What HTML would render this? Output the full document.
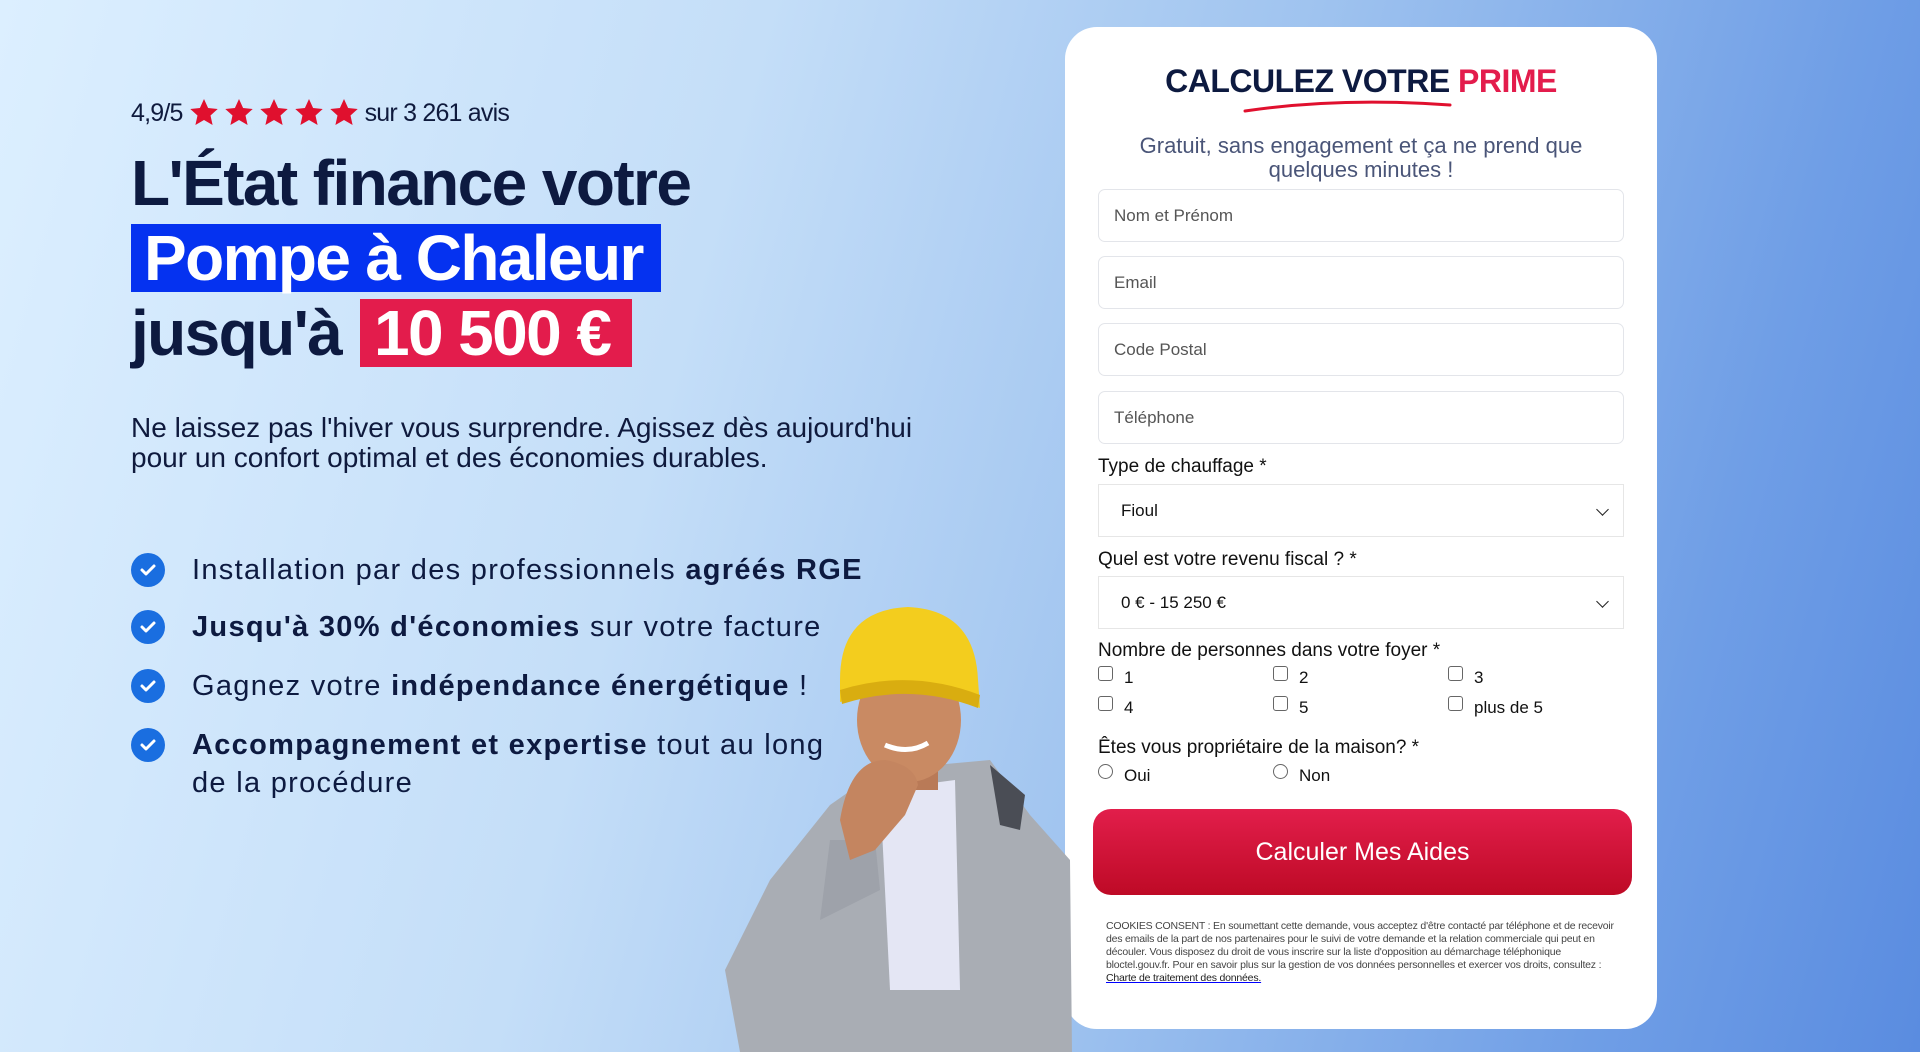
<!DOCTYPE html>
<html><head><meta charset="utf-8">
<style>
*{margin:0;padding:0;box-sizing:border-box}
body{width:1920px;height:1052px;overflow:hidden;position:relative;font-family:"Liberation Sans",sans-serif;
background:linear-gradient(105deg,#dcefff 0%,#c4def8 35%,#9fc3ef 60%,#6f9ee6 85%,#5a8ce0 100%);}
.abs{position:absolute}
.rating{left:131px;top:98px;font-size:25px;color:#0f1a3d;letter-spacing:-0.8px;display:flex;align-items:center;gap:6px;white-space:nowrap}
h1{position:absolute;left:131px;top:146px;font-size:64px;font-weight:bold;color:#0d1a40;letter-spacing:-1.6px;line-height:74px;white-space:nowrap}
.blue{position:absolute;left:131px;top:224px;width:530px;height:68px;background:#0532f0;color:#fff;font-size:64px;font-weight:bold;letter-spacing:-1.6px;line-height:68px;padding-left:13px;white-space:nowrap}
.l3{position:absolute;left:131px;top:296px;font-size:64px;font-weight:bold;color:#0d1a40;letter-spacing:-1.6px;line-height:74px}
.red{position:absolute;left:360px;top:299px;width:272px;height:68px;background:#e31c4c;color:#fff;font-size:64px;font-weight:bold;letter-spacing:-1.6px;line-height:68px;padding-left:14px;white-space:nowrap}
.para{left:131px;top:413px;font-size:28px;line-height:30px;color:#0f1a3d;width:800px;letter-spacing:0}
.bul{left:131px;font-size:29px;color:#0d1a40;letter-spacing:1.3px;line-height:38px}
.bul .ck{position:absolute;left:0;top:2px;width:34px;height:34px;border-radius:50%;background:#1a6ee0}
.bul .t{position:absolute;left:61px;top:0;white-space:nowrap}
.card{left:1065px;top:27px;width:592px;height:1002px;background:#fff;border-radius:32px}
.title{position:absolute;left:0;width:100%;top:36px;text-align:center;font-size:32px;font-weight:bold;color:#0d1a40;letter-spacing:-0.5px}
.sub{position:absolute;left:40px;width:512px;top:107px;text-align:center;font-size:22px;line-height:24px;color:#4a5578}
.inp{position:absolute;left:33px;width:526px;height:53px;border:1px solid #e3e5ea;border-radius:7px;font-size:17px;color:#555;padding-left:15px;line-height:51px}
.lbl{position:absolute;left:33px;font-size:19px;color:#111}
.sel{position:absolute;left:33px;width:526px;height:53px;border:1px solid #e6e6e6;font-size:17px;color:#111;padding-left:22px;line-height:51px}
.sel:after{content:"";position:absolute;right:16px;top:20px;width:8px;height:8px;border-right:1.5px solid #222;border-bottom:1.5px solid #222;transform:rotate(45deg)}
.cb{position:absolute;font-size:17px;color:#111}
.cb i{position:absolute;left:0;top:-2px;width:15px;height:15px;border:1.3px solid #666;border-radius:3px}
.cb i.r{border-radius:50%}
.cb span{position:absolute;left:26px;top:0;white-space:nowrap}
.btn{position:absolute;left:28px;top:782px;width:539px;height:86px;border-radius:18px;background:linear-gradient(#e21e4b,#be0a26);color:#fff;font-size:25px;text-align:center;line-height:86px}
.cons{position:absolute;left:41px;top:893px;width:512px;font-size:10.5px;line-height:13px;color:#444;letter-spacing:-0.2px}
.cons u{color:#222;text-decoration-color:#00f}
</style></head><body>

<div class="abs rating">4,9/5
<svg width="170" height="30" viewBox="0 0 170 30">
<defs><path id="s" d="M15 1l4.1 9 9.6 1-7.2 6.5 2.1 9.5L15 22l-8.6 5 2.1-9.5L1.3 11l9.6-1z" fill="#e0102e"/></defs>
<use href="#s" x="0"/><use href="#s" x="35"/><use href="#s" x="70"/><use href="#s" x="105"/><use href="#s" x="140"/>
</svg> sur 3 261 avis</div>
<h1>L'État finance votre</h1>
<div class="blue">Pompe à Chaleur</div>
<div class="l3">jusqu'à</div>
<div class="red">10 500 €</div>
<div class="abs para">Ne laissez pas l'hiver vous surprendre. Agissez dès aujourd'hui pour un confort optimal et des économies durables.</div>

<div class="abs bul" style="top:551px"><div class="ck"><svg width="34" height="34"><path d="M11 17l4 4 8-8" stroke="#fff" stroke-width="3" fill="none" stroke-linecap="round" stroke-linejoin="round"/></svg></div><div class="t">Installation par des professionnels <b>agréés RGE</b></div></div>
<div class="abs bul" style="top:608px"><div class="ck"><svg width="34" height="34"><path d="M11 17l4 4 8-8" stroke="#fff" stroke-width="3" fill="none" stroke-linecap="round" stroke-linejoin="round"/></svg></div><div class="t"><b>Jusqu'à 30% d'économies</b> sur votre facture</div></div>
<div class="abs bul" style="top:667px"><div class="ck"><svg width="34" height="34"><path d="M11 17l4 4 8-8" stroke="#fff" stroke-width="3" fill="none" stroke-linecap="round" stroke-linejoin="round"/></svg></div><div class="t">Gagnez votre <b>indépendance énergétique</b> !</div></div>
<div class="abs bul" style="top:726px"><div class="ck"><svg width="34" height="34"><path d="M11 17l4 4 8-8" stroke="#fff" stroke-width="3" fill="none" stroke-linecap="round" stroke-linejoin="round"/></svg></div><div class="t"><b>Accompagnement et expertise</b> tout au long<br>de la procédure</div></div>

<div class="abs card">
<div class="title">CALCULEZ VOTRE <span style="color:#e31c4c">PRIME</span></div>
<svg class="abs" style="left:175px;top:68px" width="220" height="25"><path d="M5 16 Q100 2 210 10" stroke="#e0102e" stroke-width="3" fill="none" stroke-linecap="round"/></svg>
<div class="sub">Gratuit, sans engagement et ça ne prend que quelques minutes !</div>
<div class="inp" style="top:162px">Nom et Prénom</div>
<div class="inp" style="top:229px">Email</div>
<div class="inp" style="top:296px">Code Postal</div>
<div class="inp" style="top:364px">Téléphone</div>
<div class="lbl" style="top:429px">Type de chauffage *</div>
<div class="sel" style="top:457px">Fioul</div>
<div class="lbl" style="top:522px">Quel est votre revenu fiscal ? *</div>
<div class="sel" style="top:549px">0 € - 15 250 €</div>
<div class="lbl" style="top:613px">Nombre de personnes dans votre foyer *</div>
<div class="cb" style="left:33px;top:641px"><i></i><span>1</span></div>
<div class="cb" style="left:208px;top:641px"><i></i><span>2</span></div>
<div class="cb" style="left:383px;top:641px"><i></i><span>3</span></div>
<div class="cb" style="left:33px;top:671px"><i></i><span>4</span></div>
<div class="cb" style="left:208px;top:671px"><i></i><span>5</span></div>
<div class="cb" style="left:383px;top:671px"><i></i><span>plus de 5</span></div>
<div class="lbl" style="top:710px">Êtes vous propriétaire de la maison? *</div>
<div class="cb" style="left:33px;top:739px"><i class="r"></i><span>Oui</span></div>
<div class="cb" style="left:208px;top:739px"><i class="r"></i><span>Non</span></div>
<div class="btn">Calculer Mes Aides</div>
<div class="cons">COOKIES CONSENT : En soumettant cette demande, vous acceptez d'être contacté par téléphone et de recevoir des emails de la part de nos partenaires pour le suivi de votre demande et la relation commerciale qui peut en découler. Vous disposez du droit de vous inscrire sur la liste d'opposition au démarchage téléphonique bloctel.gouv.fr. Pour en savoir plus sur la gestion de vos données personnelles et exercer vos droits, consultez : <u>Charte de traitement des données.</u></div>
</div>

<svg class="abs" style="left:700px;top:590px" width="400" height="462" viewBox="0 0 400 462">
<path d="M130 215 L180 180 L290 170 L330 225 L370 270 L372 462 L40 462 L25 380 L70 290 Z" fill="#a9adb4"/>
<path d="M290 175 L325 205 L320 240 L300 235 Z" fill="#4a4d55"/>
<path d="M180 200 L255 190 L260 400 L190 400 Z" fill="#e4e6f4"/>
<path d="M130 250 L175 250 L180 300 L120 330 Z" fill="#9ea2aa"/>
<rect x="183" y="140" width="55" height="60" fill="#b97a57"/>
<ellipse cx="209" cy="130" rx="52" ry="62" fill="#c98a63"/>
<path d="M140 230 Q150 170 185 170 Q215 175 218 195 L205 225 L175 260 L150 270 Z" fill="#c48560"/>
<path d="M140 90 Q140 20 208 17 Q275 20 278 90 L280 118 Q210 92 140 112 Z" fill="#f3cd1e"/>
<path d="M140 100 Q210 78 280 105 L278 118 Q210 92 142 114 Z" fill="#d9ad10"/>
<path d="M185 155 Q208 165 228 153" stroke="#fff" stroke-width="5" fill="none"/>
</svg>

</body></html>
